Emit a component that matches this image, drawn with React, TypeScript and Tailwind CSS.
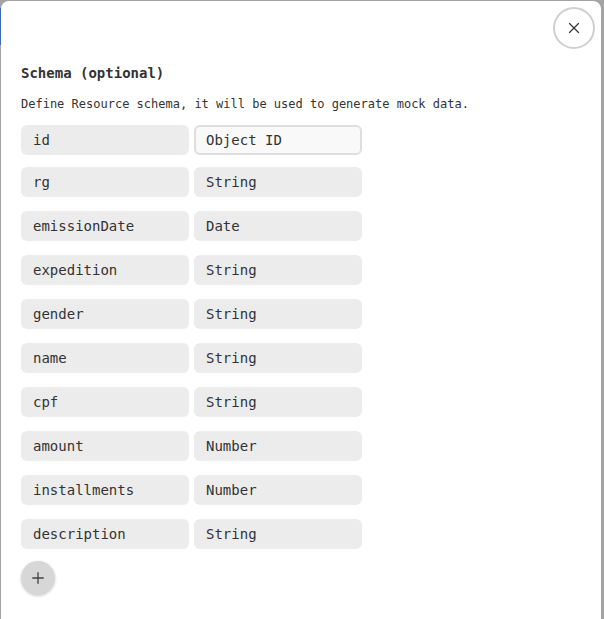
import { X, Plus } from "lucide-react"

const fields = [
  { name: "id", type: "Object ID" },
  { name: "rg", type: "String" },
  { name: "emissionDate", type: "Date" },
  { name: "expedition", type: "String" },
  { name: "gender", type: "String" },
  { name: "name", type: "String" },
  { name: "cpf", type: "String" },
  { name: "amount", type: "Number" },
  { name: "installments", type: "Number" },
  { name: "description", type: "String" },
]

export default function App() {
  return (
    <div className="relative w-[604px] h-[619px] overflow-hidden bg-[#a3a3a3] font-['DejaVu_Sans_Mono',monospace] text-[#333]">
      {/* dimmed page bits behind the modal */}
      <div className="absolute left-0 top-[8px] w-px h-[37px] bg-[#3b6bb5]" />

      <div className="relative ml-px mt-px w-[600px] h-[640px] rounded-lg bg-white pl-5 pt-[62px]">
        <button className="absolute right-[6px] top-[6px] flex h-[42px] w-[42px] items-center justify-center rounded-full border-2 border-[#cfcfcf] bg-white">
          <X className="h-[18px] w-[18px] text-[#333]" strokeWidth={1.6} />
        </button>

        <h2 className="text-[14px] font-bold leading-5">Schema (optional)</h2>
        <p className="mt-[11px] text-[12px] leading-5">
          Define Resource schema, it will be used to generate mock data.
        </p>

        <div className="mt-[11px] flex flex-col">
          {fields.map((f, i) => (
            <div key={f.name} className={`flex gap-[5px] ${i === 0 ? "mb-3" : "mb-[14px]"}`}>
              <div className="flex h-[30px] w-[168px] items-center rounded-md bg-[#ececec] px-3 text-[14px]">
                {f.name}
              </div>
              {i === 0 ? (
                <div className="flex h-[30px] w-[168px] items-center rounded-md border-2 border-[#dedede] bg-[#f9f9f9] px-[10px] text-[14px]">
                  {f.type}
                </div>
              ) : (
                <div className="flex h-[30px] w-[168px] items-center rounded-md bg-[#ececec] px-3 text-[14px]">
                  {f.type}
                </div>
              )}
            </div>
          ))}
        </div>

        <button className="mt-[-2px] flex h-[34px] w-[34px] items-center justify-center rounded-full bg-[#d7d7d7] shadow-[0_1px_3px_rgba(0,0,0,0.2)]">
          <Plus className="h-[18px] w-[18px] text-[#444]" strokeWidth={1.8} />
        </button>
      </div>
    </div>
  )
}
